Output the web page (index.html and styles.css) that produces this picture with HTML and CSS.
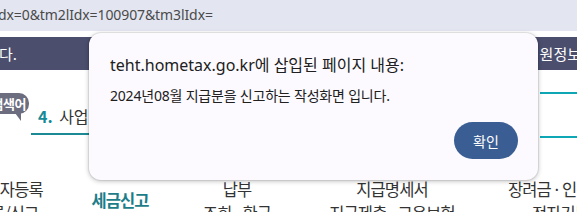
FILE: index.html
```html
<!DOCTYPE html>
<html lang="ko">
<head>
<meta charset="utf-8">
<link rel="stylesheet" href="styles.css">
</head>
<body>
<div class="addr">dx=0&amp;tm2lIdx=100907&amp;tm3lIdx=</div>
<div class="page">
  <div class="darkbar">
    <span class="dk-left">다.</span>
    <span class="dk-right">원정보</span>
  </div>
  <div class="mid">
    <div class="bubble"><div class="bubble-box"><span>검색어</span></div><div class="bubble-tail"></div></div>
    <div class="step"><b>4.</b> 사업</div>
    <div class="rlines"></div>
  </div>
  <div class="menu">
    <div class="col c1"><div>사업자등록</div><div>등록/신고</div></div>
    <div class="col c2 on"><div>세금신고</div></div>
    <div class="col c3"><div>납부</div><div>조회 · 환급</div></div>
    <div class="col c4"><div>지급명세서</div><div>지급제출 · 고용보험</div></div>
    <div class="col c5"><div>장려금 · 인센티브</div><div class="sub">전자기부금</div></div>
  </div>
</div>
<div class="dialog">
  <div class="d-title">teht.hometax.go.kr에 삽입된 페이지 내용:</div>
  <div class="d-msg">2024년08월 지급분을 신고하는 작성화면 입니다.</div>
  <div class="d-actions"><button class="d-btn">확인</button></div>
</div>
</body>
</html>
```
FILE: styles.css
```css
html, body { margin: 0; padding: 0; }
body {
  width: 577px; height: 212px; overflow: hidden; position: relative;
  background: #fff;
  font-family: "Noto Sans", "Noto Sans CJK KR", sans-serif;
  color: #333;
}
.addr {
  height: 31px; background: #e3e6f1;
  font-size: 14px; line-height: 29px; color: #4a4a4a;
  white-space: nowrap; margin-left: -2px;
  letter-spacing: -0.1px;
}
.page { padding-top: 6px; }
.darkbar {
  height: 33px; background: #4b4e6d; color: #fff;
  display: flex; justify-content: space-between; align-items: center;
  font-family: "Noto Sans CJK KR", sans-serif; font-size: 15px;
  overflow: hidden;
}
.dk-left { margin-left: -1px; }
.dk-right { margin-right: -4px; white-space: nowrap; }
.mid { position: relative; height: 72px; display: flex; align-items: flex-start; }
.bubble { margin-top: 23px; width: 29px; position: relative; flex: none; }
.bubble-box {
  height: 21px; background: #6c6d7e; border-radius: 0 10px 10px 0;
  overflow: hidden; display: flex; justify-content: flex-end; align-items: center;
}
.bubble-box span {
  color: #fff; font-size: 13px; font-weight: 700; white-space: nowrap;
  font-family: "Noto Sans CJK KR", sans-serif; padding-right: 3px; flex: none;
  line-height: 21px; letter-spacing: -0.5px;
}
.bubble-tail {
  position: absolute; left: 15px; top: 20px;
  border-left: 6px solid transparent; border-top: 8px solid #6c6d7e;
}
.step {
  margin-left: 2px; margin-top: 35px; padding: 0 0 5px 7px; width: 80px;
  border-bottom: 2px solid #1b8a94; font-size: 16px; white-space: nowrap;
  font-family: "Noto Sans CJK KR", sans-serif; color: #333; line-height: 23px;
  word-spacing: 2px;
}
.step b { color: #148b96; font-weight: 700; }
.rlines {
  position: absolute; left: 540px; right: 0; top: 22px; height: 42px;
  border-top: 2px solid #0da7b5; border-bottom: 2px solid #0da7b5;
}
.menu {
  display: flex; align-items: flex-start; padding-top: 35px;
  font-family: "Noto Sans CJK KR", sans-serif; font-size: 16.5px; color: #333;
  line-height: 24px; letter-spacing: -0.9px;
}
.col { text-align: center; white-space: nowrap; flex: none; }
.c1 { width: 140px; margin-left: -63px; }
.c2 { width: 90px; margin-left: -2px; color: #1d7d89; font-weight: 700; padding-top: 11px; }
.c3 { width: 140px; margin-left: 2px; }
.c4 { width: 170px; }
.c5 { text-align: left; padding-left: 31px; }
.c5 .sub { padding-left: 24px; }
.dialog {
  position: absolute; left: 89px; top: 33px; width: 449px; height: 147px;
  box-sizing: border-box; background: #fcfaff; border-radius: 12px;
  box-shadow: 0 1px 5px rgba(0,0,0,0.28), 0 0 0 1px rgba(0,0,0,0.06);
  padding: 20px 20px 0 21px;
  font-family: "Noto Sans", "Noto Sans CJK KR", sans-serif; color: #202020;
}
.d-title { font-size: 16px; line-height: 24px; white-space: nowrap; }
.d-msg { font-size: 14px; line-height: 18px; margin-top: 10px; white-space: nowrap; letter-spacing: -0.2px; }
.d-actions { display: flex; justify-content: flex-end; margin-top: 17px; }
.d-btn {
  width: 64px; height: 37px; border: 0; border-radius: 19px;
  background: #3a5e94; color: #fff; font-size: 14px;
  font-family: "Noto Sans CJK KR", sans-serif; padding: 0;
}
```
